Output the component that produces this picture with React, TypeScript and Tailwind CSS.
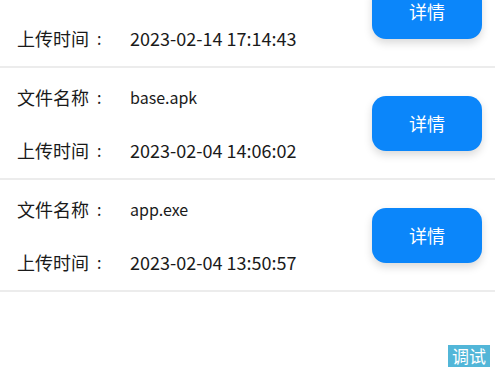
import React from "react";

const files = [
  { name: "demo.zip", time: "2023-02-14 17:14:43" },
  { name: "base.apk", time: "2023-02-04 14:06:02" },
  { name: "app.exe", time: "2023-02-04 13:50:57" },
];

function Label({ text }: { text: string }) {
  return (
    <span className="flex w-[113px] items-center">
      <span>{text}</span>
      <span className="ml-[8px] text-[16px]">:</span>
    </span>
  );
}

export default function App() {
  return (
    <div
      className="relative w-[495px] h-[370px] overflow-hidden bg-white text-[#1a1a1a]"
      style={{ fontFamily: '"Noto Sans CJK SC", "Noto Sans", sans-serif' }}
    >
      <div className="-mt-[44px]">
        {files.map((f) => (
          <div
            key={f.time}
            className="flex h-[112px] items-center justify-between border-b-2 border-[#ececec] pl-[17px] pr-[13px]"
          >
            <div className="flex flex-col gap-[29px] text-[18px] leading-[24px]">
              <div className="flex">
                <Label text="文件名称" />
                <span className="text-[16px]">{f.name}</span>
              </div>
              <div className="flex">
                <Label text="上传时间" />
                <span className="text-[18px]">{f.time}</span>
              </div>
            </div>
            <button className="h-[55px] w-[110px] rounded-[14px] bg-[#0b86fa] text-[18px] text-white shadow-[0_4px_8px_rgba(0,0,0,0.15)]">
              详情
            </button>
          </div>
        ))}
      </div>
      <div className="absolute right-[5px] bottom-[3px] bg-[#52b6d8] px-[4px] text-[17px] leading-[22px] text-white">
        调试
      </div>
    </div>
  );
}
